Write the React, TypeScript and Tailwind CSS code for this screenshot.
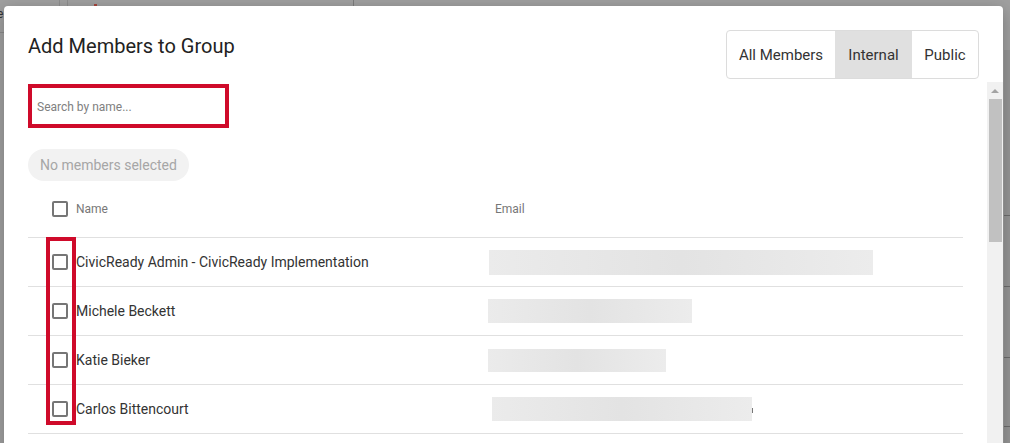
import React from "react";

const rows = [
  { name: "CivicReady Admin - CivicReady Implementation", w: 384, off: 1, h: 25, tick: false },
  { name: "Michele Beckett", w: 204, off: 0, h: 24, tick: false },
  { name: "Katie Bieker", w: 178, off: 0, h: 23, tick: false },
  { name: "Carlos Bittencourt", w: 260, off: 4, h: 24, tick: true },
];

function Box() {
  return <div className="w-4 h-4 border-2 border-[#767676] rounded-[2px] bg-white shrink-0" />;
}

export default function App() {
  return (
    <div className="w-[1010px] h-[443px] bg-[#a0a0a0] relative overflow-hidden font-['Roboto',sans-serif]">
      {/* page behind the backdrop */}
      <div className="absolute left-[59px] top-0 w-px h-[6px] bg-[#8e8e8e]" />
      <div className="absolute left-[67px] top-0 w-px h-[6px] bg-[#8e8e8e]" />
      <div className="absolute left-[353px] top-0 w-px h-[6px] bg-[#7c7c7c]" />
      <div className="absolute left-[94px] top-[4px] w-[3px] h-[2px] bg-[#a5443c]" />
      <div className="absolute left-[-3px] top-[8px] text-[12px] leading-none text-[#333]">e</div>
      <div className="absolute left-0 top-[32px] w-[4px] h-px bg-[#8a8a8a]" />
      <div className="absolute left-[1004px] top-[50px] w-[6px] h-[400px] bg-[#959595]" />
      <div className="absolute left-[1004px] top-[215px] w-[6px] h-px bg-[#6c6c6c]" />
      <div className="absolute left-[1004px] top-[286px] w-[6px] h-px bg-[#6c6c6c]" />
      <div className="absolute left-[1004px] top-[357px] w-[6px] h-px bg-[#6c6c6c]" />
      <div className="absolute left-[1004px] top-[426px] w-[6px] h-px bg-[#6c6c6c]" />

      {/* modal */}
      <div className="absolute left-[4px] top-[6px] w-[999px] h-[480px] bg-white rounded-[4px] shadow-[0_4px_16px_rgba(0,0,0,0.25)] flex flex-col">
        <div className="flex justify-between items-start pl-6 pr-6 pt-6 pb-[3px]">
          <h2 className="mt-[2px] text-[20px] leading-[28px] text-[#222] font-normal">Add Members to Group</h2>
          <div className="flex h-[49px] border border-[#dcdcdc] rounded-[4px] overflow-hidden text-[15px] text-[#333]">
            <div className="w-[108px] flex items-center justify-center pt-[1px]">All Members</div>
            <div className="w-[77px] flex items-center justify-center bg-[#e0e0e0] pt-[1px]">Internal</div>
            <div className="w-[66px] flex items-center justify-center pt-[1px]">Public</div>
          </div>
        </div>

        <div className="flex flex-1 overflow-hidden">
          <div className="flex-1 pl-6 pr-6 pt-[2px] relative">
            <div className="w-[201px] h-[44px] border-4 border-[#cf0a2a] flex items-center pl-[5px] pt-[1px] text-[12px] text-[#808080]">
              Search by name...
            </div>
            <div className="mt-[21px] w-[161px] h-[32px] rounded-full bg-[#f2f2f2] flex items-center justify-center text-[14px] text-[#a6a6a6]">
              No members selected
            </div>

            <div className="w-[935px]">
              <div className="h-[57px] flex items-center border-b border-[#e0e0e0]">
                <div className="w-[460px] flex items-center gap-2 pl-6">
                  <Box />
                  <span className="text-[12px] text-[#777]">Name</span>
                </div>
                <div className="pl-[7px] text-[12px] text-[#777]">Email</div>
              </div>
              {rows.map((r) => (
                <div key={r.name} className="h-[49px] flex items-center border-b border-[#e0e0e0]">
                  <div className="w-[460px] flex items-center gap-2 pl-6">
                    <Box />
                    <span className="text-[14px] text-[#333]">{r.name}</span>
                  </div>
                  <div className="flex items-center">
                    <div
                      className="bg-gradient-to-r from-[#ebebeb] via-[#e3e3e3] to-[#ececec]"
                      style={{ width: r.w, height: r.h, marginLeft: r.off }}
                    />
                    {r.tick && <div className="w-px h-[5px] mt-[2px] bg-[#777]" />}
                  </div>
                </div>
              ))}
            </div>

            {/* annotation around checkboxes */}
            <div className="absolute left-[42px] top-[155px] w-[30px] h-[188px] border-4 border-[#cf0a2a]" />
          </div>

          {/* scrollbar */}
          <div className="w-4 bg-[#f1f1f1] flex flex-col items-end pr-px">
            <div className="w-full h-[17px] flex items-center justify-center">
              <div className="w-0 h-0 border-l-[4px] border-r-[4px] border-b-[4px] border-l-transparent border-r-transparent border-b-[#a3a3a3]" />
            </div>
            <div className="w-[13px] h-[143px] bg-[#c1c1c1]" />
          </div>
        </div>
      </div>
    </div>
  );
}
